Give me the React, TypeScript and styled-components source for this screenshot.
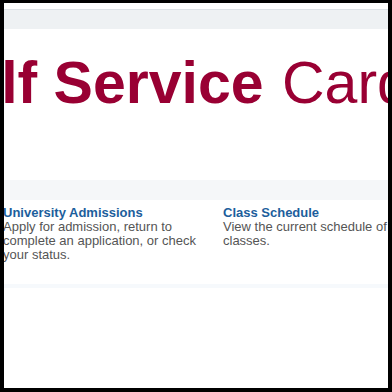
import React from "react";
import styled, { createGlobalStyle } from "styled-components";

const GlobalStyle = createGlobalStyle`
  html, body {
    margin: 0;
    padding: 0;
    background: #000;
  }
  body {
    font-family: "Liberation Sans", Arial, sans-serif;
  }
`;

const Frame = styled.div`
  width: 384px;
  height: 385px;
  margin: 3px 4px 4px 4px;
  background: #fff;
  overflow: hidden;
  display: flex;
  flex-direction: column;
`;

const TopBar = styled.div`
  margin-top: 6px;
  height: 19px;
  border-top: 1px solid #dde2e6;
  background: #eef1f3;
  flex: none;
`;

const Heading = styled.h1`
  margin: 25px 0 0 -75px;
  font-size: 59px;
  line-height: 58px;
  font-weight: 400;
  color: #990033;
  white-space: nowrap;
  word-spacing: 2px;
  flex: none;
`;

const Strong = styled.span`
  font-weight: 700;
  word-spacing: 0;
`;

const Band = styled.div`
  margin-top: 68px;
  height: 20px;
  background: #f5f7f9;
  flex: none;
`;

const CardGrid = styled.div`
  margin: 5px 0 0 -1px;
  display: grid;
  grid-template-columns: 200px 200px;
  column-gap: 20px;
  flex: none;
`;

const Card = styled.div`
  display: flex;
  flex-direction: column;
`;

const CardTitle = styled.a`
  font-size: 13px;
  line-height: 15px;
  font-weight: 700;
  color: #1c5e9c;
  text-decoration: none;
`;

const CardText = styled.p`
  margin: 0;
  font-size: 13px;
  line-height: 14px;
  color: #555;
`;

const Separator = styled.div`
  margin-top: 22px;
  height: 4px;
  background: #f6f9fc;
  flex: none;
`;

const cards = [
  {
    title: "University Admissions",
    text: "Apply for admission, return to complete an application, or check your status.",
  },
  {
    title: "Class Schedule",
    text: "View the current schedule of classes.",
  },
];

export default function App() {
  return (
    <>
      <GlobalStyle />
      <Frame>
        <TopBar />
        <Heading>
          <Strong>Self Service</Strong> Cardinal Station
        </Heading>
        <Band />
        <CardGrid>
          {cards.map((c) => (
            <Card key={c.title}>
              <CardTitle href="#">{c.title}</CardTitle>
              <CardText>{c.text}</CardText>
            </Card>
          ))}
        </CardGrid>
        <Separator />
      </Frame>
    </>
  );
}
